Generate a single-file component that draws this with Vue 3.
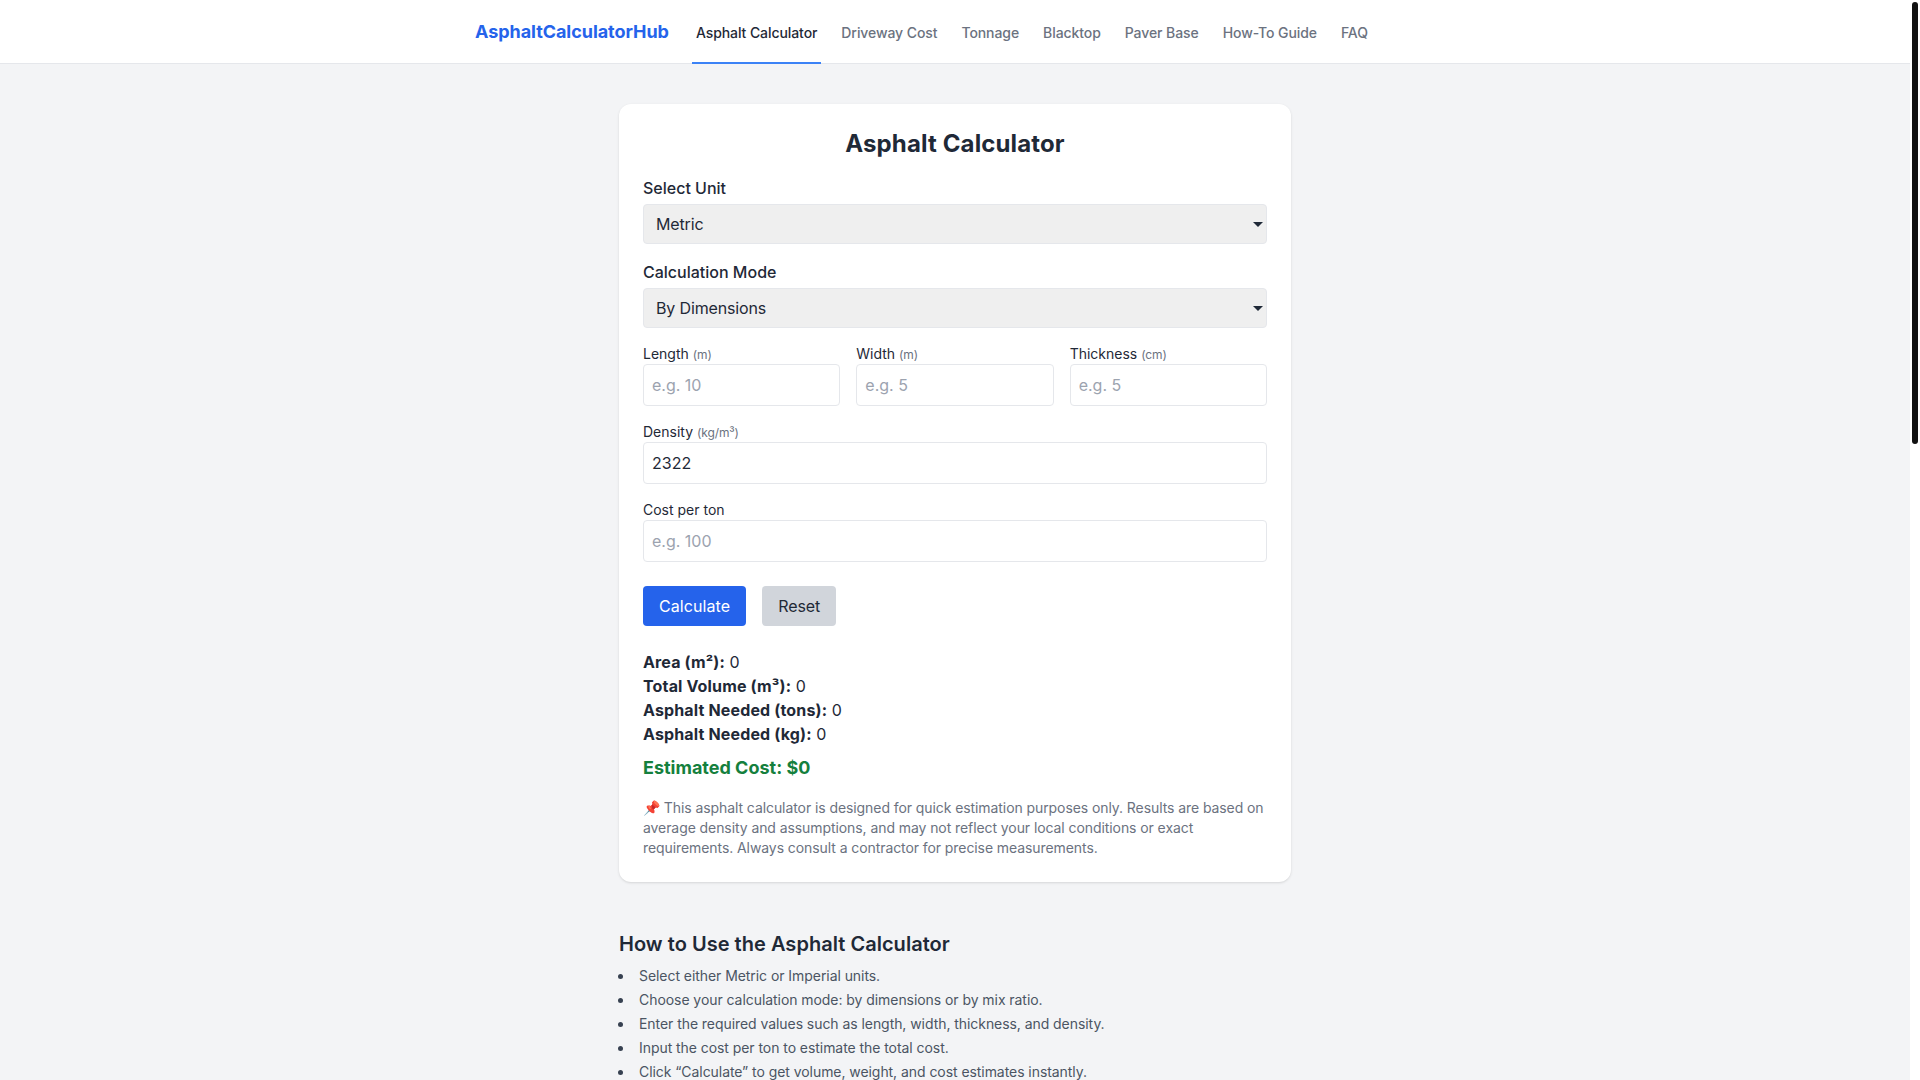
<script setup>
const links = ['Asphalt Calculator', 'Driveway Cost', 'Tonnage', 'Blacktop', 'Paver Base', 'How-To Guide', 'FAQ']
const dims = [
  { name: 'Length', unit: '(m)', ph: 'e.g. 10' },
  { name: 'Width', unit: '(m)', ph: 'e.g. 5' },
  { name: 'Thickness', unit: '(cm)', ph: 'e.g. 5' },
]
const results = ['Area (m²):', 'Total Volume (m³):', 'Asphalt Needed (tons):', 'Asphalt Needed (kg):']
const steps = [
  'Select either Metric or Imperial units.',
  'Choose your calculation mode: by dimensions or by mix ratio.',
  'Enter the required values such as length, width, thickness, and density.',
  'Input the cost per ton to estimate the total cost.',
  'Click “Calculate” to get volume, weight, and cost estimates instantly.',
]
</script>

<template>
  <div class="shell">
    <div class="page">
      <header class="header">
        <div class="nav">
          <a class="brand">AsphaltCalculatorHub</a>
          <nav class="links">
            <a v-for="(l, i) in links" :key="l" class="link" :class="{ active: i === 0 }">{{ l }}</a>
          </nav>
        </div>
      </header>
      <main class="main">
        <section class="card">
          <h1 class="title">Asphalt Calculator</h1>
          <div class="field">
            <label class="big">Select Unit</label>
            <div class="select-wrap">
              <select class="select"><option>Metric</option><option>Imperial</option></select>
            </div>
          </div>
          <div class="field">
            <label class="big">Calculation Mode</label>
            <div class="select-wrap">
              <select class="select"><option>By Dimensions</option><option>By Mix Ratio</option></select>
            </div>
          </div>
          <div class="grid">
            <div v-for="d in dims" :key="d.name">
              <label class="small">{{ d.name }} <span class="unit">{{ d.unit }}</span></label>
              <input class="input" :placeholder="d.ph" />
            </div>
          </div>
          <div class="field">
            <label class="small">Density <span class="unit">(kg/m³)</span></label>
            <input class="input" value="2322" />
          </div>
          <div class="field">
            <label class="small">Cost per ton</label>
            <input class="input" placeholder="e.g. 100" />
          </div>
          <div class="buttons">
            <button class="btn primary">Calculate</button>
            <button class="btn secondary">Reset</button>
          </div>
          <div class="results">
            <p v-for="r in results" :key="r"><strong>{{ r }}</strong> 0</p>
          </div>
          <p class="cost">Estimated Cost: $0</p>
          <p class="note">📌 This asphalt calculator is designed for quick estimation purposes only. Results are based on average density and assumptions, and may not reflect your local conditions or exact requirements. Always consult a contractor for precise measurements.</p>
        </section>
        <section class="howto">
          <h2 class="heading">How to Use the Asphalt Calculator</h2>
          <ul class="steps">
            <li v-for="s in steps" :key="s">{{ s }}</li>
          </ul>
        </section>
      </main>
    </div>
    <div class="scrollbar"><div class="thumb"></div></div>
  </div>
</template>

<style scoped>
.shell {
  display: flex;
  height: 100vh;
  overflow: hidden;
  background: #fff;
}
.page {
  flex: 1;
  min-width: 0;
  background: #f3f4f6;
  color: #1f2937;
  font-family: Inter, "Liberation Sans", sans-serif;
  font-size: 16px;
  line-height: 24px;
}
.scrollbar {
  flex: none;
  width: 10px;
  background: #fff;
}
.thumb {
  width: 6px;
  height: 442px;
  margin: 2px;
  border-radius: 3px;
  background: #111;
}
.header {
  height: 64px;
  box-sizing: border-box;
  background: #fff;
  border-bottom: 1px solid #e5e7eb;
}
.nav {
  width: 960px;
  height: 64px;
  margin: 0 auto;
  display: flex;
  align-items: stretch;
  gap: 23px;
}
.brand {
  align-self: center;
  font-size: 18px;
  line-height: 28px;
  font-weight: 700;
  letter-spacing: -0.05px;
  color: #2563eb;
}
.links {
  display: flex;
  gap: 16px;
}
.link {
  display: flex;
  align-items: center;
  padding: 4px 4px 0;
  font-size: 14px;
  font-weight: 500;
  letter-spacing: -0.08px;
  color: #6b7280;
  border-bottom: 2px solid transparent;
  height: 64px;
  box-sizing: border-box;
}
.link.active {
  color: #1f2937;
  border-bottom-color: #3b82f6;
}
.main {
  width: 672px;
  margin: 0 auto;
  padding-top: 40px;
}
.card {
  background: #fff;
  border-radius: 12px;
  padding: 24px;
  box-shadow: 0 1px 3px rgba(0, 0, 0, 0.1), 0 1px 2px -1px rgba(0, 0, 0, 0.1);
}
.title {
  margin: 0 0 16px;
  font-size: 24px;
  line-height: 32px;
  font-weight: 700;
  letter-spacing: 0.13px;
  text-align: center;
}
.field {
  margin-bottom: 16px;
}
label {
  display: block;
}
.big {
  font-weight: 500;
  margin-bottom: 4px;
}
.small {
  font-size: 14px;
  line-height: 20px;
  font-weight: 400;
}
.unit {
  font-size: 12px;
  line-height: 1;
  letter-spacing: -0.1px;
  color: #6b7280;
}
.select-wrap {
  position: relative;
}
.select-wrap::after {
  content: "";
  position: absolute;
  right: 4px;
  top: 18px;
  border-style: solid;
  border-width: 5px 5px 0;
  border-color: #1f2937 transparent transparent;
  pointer-events: none;
}
.select {
  display: block;
  width: 100%;
  height: 40px;
  box-sizing: border-box;
  padding: 8px 12px;
  border: 1px solid #e5e7eb;
  border-radius: 4px;
  background-color: #efefef;
  color: #1f2937;
  font-family: inherit;
  font-size: 16px;
  letter-spacing: -0.15px;
  appearance: none;
}
.grid {
  display: grid;
  grid-template-columns: repeat(3, 1fr);
  gap: 16px;
  margin-bottom: 16px;
}
.input {
  display: block;
  width: 100%;
  height: 42px;
  box-sizing: border-box;
  padding: 8px;
  border: 1px solid #e5e7eb;
  border-radius: 4px;
  background: #fff;
  color: #1f2937;
  font-family: inherit;
  font-size: 16px;
  line-height: 24px;
}
.input::placeholder {
  color: #9ca3af;
}
.buttons {
  display: flex;
  gap: 16px;
  margin-top: 24px;
}
.btn {
  height: 40px;
  padding: 0 16px;
  border: 0;
  border-radius: 4px;
  font-family: inherit;
  font-size: 16px;
  line-height: 24px;
}
.primary {
  background: #2563eb;
  color: #fff;
  letter-spacing: 0.08px;
}
.secondary {
  background: #d1d5db;
  color: #1f2937;
  letter-spacing: -0.05px;
}
.results {
  margin-top: 24px;
}
.results p {
  margin: 0;
}
.results strong {
  font-weight: 700;
  letter-spacing: 0.15px;
}
.cost {
  margin: 8px 0 0;
  font-size: 18px;
  line-height: 28px;
  font-weight: 700;
  color: #15803d;
}
.note {
  margin: 16px 0 0;
  font-size: 14px;
  line-height: 20px;
  letter-spacing: -0.08px;
  color: #6b7280;
}
.howto {
  margin-top: 48px;
}
.heading {
  margin: 0 0 6px;
  font-size: 20px;
  line-height: 28px;
  font-weight: 600;
  letter-spacing: 0.03px;
}
.steps {
  margin: 0;
  padding: 0;
  list-style: none;
  font-size: 14px;
  line-height: 24px;
  letter-spacing: -0.06px;
  color: #4b5563;
}
.steps li {
  display: flex;
  align-items: center;
}
.steps li::before {
  content: "";
  flex: none;
  width: 5px;
  height: 5px;
  margin: 0 16px 0 -1px;
  border-radius: 50%;
  background: #374151;
}
</style>
